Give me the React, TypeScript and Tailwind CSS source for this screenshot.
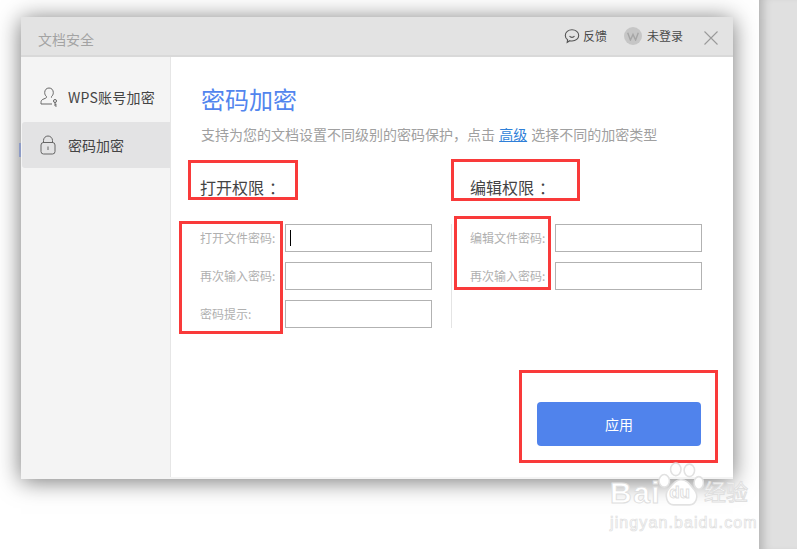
const rowLabels = ["打开文件密码:", "再次输入密码:", "密码提示:"];
const editLabels = ["编辑文件密码:", "再次输入密码:"];

function Field({ label, caret }: { label: string; caret?: boolean }) {
  return (
    <div className="flex h-7 items-center">
      <span className="w-[85px] shrink-0 text-xs leading-7 text-[#b0b0b0]">{label}</span>
      <div className="flex h-7 w-[147px] items-center border border-[#b2b2b2] bg-white pl-[4px]">
        {caret && <span className="h-4 w-px bg-black" />}
      </div>
    </div>
  );
}

function RedBox({ className }: { className: string }) {
  return <div className={`pointer-events-none absolute border-[3px] border-[#f93a3a] ${className}`} />;
}

function Watermark() {
  return (
    <div className="pointer-events-none absolute left-[610px] top-[462px] h-[70px] w-[146px] select-none font-['Liberation_Sans','Noto_Sans_CJK_SC',sans-serif] text-white">
      <svg className="absolute left-[48px] top-0" width="46" height="46" viewBox="0 0 44 44" fill="#fff" stroke="#e2e2e2" strokeWidth="1.5">
        <ellipse cx="17" cy="7" rx="5" ry="6" />
        <ellipse cx="30" cy="8" rx="5" ry="6" />
        <ellipse cx="6" cy="18" rx="5" ry="6" />
        <ellipse cx="39" cy="20" rx="4.5" ry="6" />
        <path d="M22 17c-6 0-8 5-12 9-4 5-2 15 5 15h15c7 0 9-9 5-14-4-4-6-10-13-10z" />
      </svg>
      <div className="absolute left-0 top-[15px] flex h-[32px] items-center text-[30px] font-bold leading-[32px] tracking-[1.5px] text-white [-webkit-text-stroke:1px_#dfdfdf]">
        <span>Bai</span>
        <span className="ml-[8px] text-[17px] tracking-normal text-white">du</span>
        <span className="ml-[14px] text-[22px] font-normal leading-[24px] tracking-normal">经验</span>
      </div>
      <div className="absolute left-0 top-[52px] text-base leading-[18px] tracking-[1.1px] text-white [-webkit-text-stroke:0.7px_#dedede]">
        jingyan.baidu.com
      </div>
    </div>
  );
}

export default function App() {
  return (
    <div className="relative flex h-[549px] w-[797px] overflow-hidden bg-white font-['Noto_Sans_CJK_SC','Microsoft_YaHei',sans-serif]">
      <div className="flex-1 pl-[21px] pt-[17px]">
        <div className="relative flex h-[462px] w-[712px] flex-col bg-[#f4f4f4] shadow-[0_2px_22px_rgba(0,0,0,0.55)]">
          <header className="flex h-10 shrink-0 items-center border-b-2 border-[#d9d9d9] bg-[#e3e3e3] pl-[17px] pr-[15px]">
            <span className="mt-[5px] text-sm text-[#a3a3a3]">文档安全</span>
            <div className="ml-auto flex items-center">
              <svg width="16" height="16" viewBox="0 0 16 16" fill="none" stroke="#555" strokeWidth="1.1">
                <path d="M8 1.8c3.7 0 6.7 2.4 6.7 5.6S11.7 13 8 13c-.8 0-1.500-.1-2.200-.3L3.200 14.300l.4-2.600C2.100 10.700 1.300 9.200 1.300 7.400 1.300 4.200 4.300 1.800 8 1.800z" />
                <path d="M5.500 8c.7 1 1.500 1.400 2.500 1.400S9.800 9 10.500 8" />
              </svg>
              <span className="ml-[3px] text-xs text-[#4a4a4a]">反馈</span>
              <div className="ml-[17px] flex h-[18px] w-[18px] items-center justify-center rounded-full bg-[#c6c6c6]">
                <svg width="12" height="9" viewBox="0 0 12 9" fill="none" stroke="#a6a6a6" strokeWidth="1.4">
                  <path d="M.7.800 3.400 8 6 2.500 8.600 8 11.300.8" />
                </svg>
              </div>
              <span className="ml-[5px] text-xs text-[#4a4a4a]">未登录</span>
              <svg className="ml-[21px] mt-[4px]" width="14" height="14" viewBox="0 0 14 14" stroke="#9a9a9a" strokeWidth="1.1">
                <path d="M.5.500l13 13M13.500.500l-13 13" />
              </svg>
            </div>
          </header>

          <div className="flex min-h-0 flex-1 pb-[2px]">
            <aside className="w-[150px] shrink-0 border-r border-[#e6e6e6] pt-[19px]">
              <div className="flex h-[46px] items-center pb-[5px] pl-[19px]">
                <svg width="18" height="20" viewBox="0 0 18 20" fill="none" stroke="#666" strokeWidth="1">
                  <path d="M9 1c-2.600 0-4.300 2-4.300 4.600 0 1.700.7 3 1.800 4 .3.600-.1 1.200-.7 1.500l-3 1.300C1.500 13 1 14 1 15.500V17h11" />
                  <path d="M9 1c2.600 0 4.300 2 4.300 4.600 0 1.700-.7 3-1.800 4-.2.400-.2.800.1 1.100" />
                  <circle cx="15" cy="14" r="1.500" />
                  <path d="M15 15.500V19h1.800M15 17.300h1.500" />
                </svg>
                <span className="ml-[10px] text-sm tracking-[0.25px] text-[#444]">WPS账号加密</span>
              </div>
              <div className="ml-px flex h-[46px] items-center rounded-l-[3px] bg-[#e3e3e4] pb-[1px] pl-[18px]">
                <svg width="16" height="20" viewBox="0 0 16 20" fill="none" stroke="#666" strokeWidth="1">
                  <path d="M3.500 8V5.500a4.500 4.500 0 0 1 9 0V8" />
                  <rect x="1" y="7.500" width="14" height="11.500" rx="2.500" />
                  <path d="M8 11.500v3.500" />
                </svg>
                <span className="ml-[12px] text-sm text-[#444]">密码加密</span>
              </div>
            </aside>

            <main className="flex-1 bg-white pl-[29px] pt-[25px]">
              <h1 className="ml-px text-2xl leading-[34px] text-[#5285ee]">密码加密</h1>
              <p className="ml-px mt-2 text-sm leading-5 text-[#a0a0a0]">
                支持为您的文档设置不同级别的密码保护，点击{" "}
                <span className="mx-px text-[#2f7fd8] underline">高级</span> 选择不同的加密类型
              </p>
              <div className="mt-[31px] flex">
                <section className="w-[251px]">
                  <h2 className="h-[24px] text-base leading-6 text-[#444]">
                    打开权限<span className="ml-[5px]">：</span>
                  </h2>
                  <div className="mt-[25px] flex flex-col gap-[10px]">
                    {rowLabels.map((label, i) => (
                      <Field key={label} label={label} caret={i === 0} />
                    ))}
                  </div>
                </section>
                <section className="flex flex-col">
                  <h2 className="ml-[19px] h-[24px] text-base leading-6 text-[#444]">
                    编辑权限<span className="ml-[5px]">：</span>
                  </h2>
                  <div className="mt-[25px] flex h-[104px] flex-col gap-[10px] border-l border-[#e4e4e4] pl-[18px]">
                    {editLabels.map((label) => (
                      <Field key={label} label={label} />
                    ))}
                  </div>
                </section>
              </div>
              <div className="mt-[74px] flex justify-end pr-[32px]">
                <button type="button" className="h-11 w-[164px] rounded-[4px] bg-[#5083ec] text-sm text-white">
                  应用
                </button>
              </div>
            </main>
          </div>
          <div className="absolute -left-[2px] top-[126px] h-[14px] w-[2px] bg-[#8e9cc6]" />
        </div>
      </div>
      <div className="w-[38px] shrink-0 bg-[#e0e0e0] shadow-[inset_10px_0_10px_-6px_rgba(0,0,0,0.2)]" />

      <RedBox className="left-[188px] top-[160px] h-[40px] w-[110px]" />
      <RedBox className="left-[179px] top-[221px] h-[113px] w-[104px]" />
      <RedBox className="left-[451px] top-[159px] h-[42px] w-[129px]" />
      <RedBox className="left-[454px] top-[216px] h-[74px] w-[97px]" />
      <RedBox className="left-[519px] top-[370px] h-[93px] w-[199px]" />
      <Watermark />
    </div>
  );
}
